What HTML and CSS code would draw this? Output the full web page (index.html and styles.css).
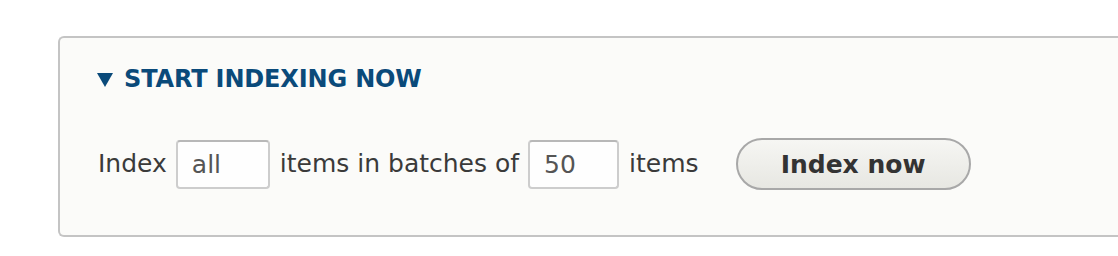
FILE: index.html
```html
<!DOCTYPE html>
<html lang="en">
<head>
<meta charset="utf-8">
<title>Start indexing now</title>
<link rel="stylesheet" href="styles.css">
</head>
<body>
<div class="panel">
  <div class="legend">
    <svg class="caret" width="16" height="14" viewBox="0 0 16 14" aria-hidden="true"><polygon points="0,0 16,0 8,14" fill="#0a4a7a"/></svg>
    <span class="legend-text">START INDEXING NOW</span>
  </div>
  <div class="form-row">
    <span class="label">Index</span>
    <input class="field" type="text" value="all">
    <span class="label">items in batches of</span>
    <input class="field" type="text" value="50">
    <span class="label">items</span>
    <button class="btn" type="button">Index now</button>
  </div>
</div>
</body>
</html>
```

FILE: styles.css
```css
html, body {
  margin: 0;
  padding: 0;
  background: #ffffff;
  overflow: hidden;
}

body {
  width: 1118px;
  height: 256px;
  font-family: "DejaVu Sans", Verdana, sans-serif;
}

.panel {
  box-sizing: border-box;
  margin: 36px 0 0 58px;
  width: 1060px;
  height: 201px;
  border: 2px solid #c4c4c4;
  border-right: none;
  border-radius: 6px 0 0 6px;
  background: #fbfbf9;
  padding: 26px 0 0 37px;
}

.legend {
  display: flex;
  align-items: center;
  height: 30px;
}

.caret {
  display: block;
  margin: 1px 11px 0 0;
}

.legend-text {
  font-size: 24px;
  line-height: 30px;
  font-weight: bold;
  letter-spacing: -0.15px;
  color: #0a4a7a;
}

.form-row {
  display: flex;
  align-items: center;
  height: 52px;
  margin-top: 44px;
  padding-left: 1px;
}

.label {
  font-size: 25px;
  line-height: 30px;
  color: #3a3a3a;
}

.field {
  box-sizing: border-box;
  width: 94px;
  height: 49px;
  margin: 0 10px 0 9px;
  padding: 0 14px;
  border: 2px solid #cdcdcd;
  border-top-color: #b8b8b8;
  border-radius: 4px;
  background: #fefefe;
  font-family: "DejaVu Sans", Verdana, sans-serif;
  font-size: 25px;
  color: #555555;
  outline: none;
}

.field + .label + .field {
  width: 91px;
}

.btn {
  box-sizing: border-box;
  width: 235px;
  height: 52px;
  margin-left: 37px;
  padding: 0;
  border: 2px solid #a8a8a8;
  border-radius: 26px;
  background: linear-gradient(#f6f6f3, #e7e7e2);
  font-family: "DejaVu Sans", Verdana, sans-serif;
  font-size: 25px;
  font-weight: bold;
  color: #333333;
  cursor: pointer;
}
```
